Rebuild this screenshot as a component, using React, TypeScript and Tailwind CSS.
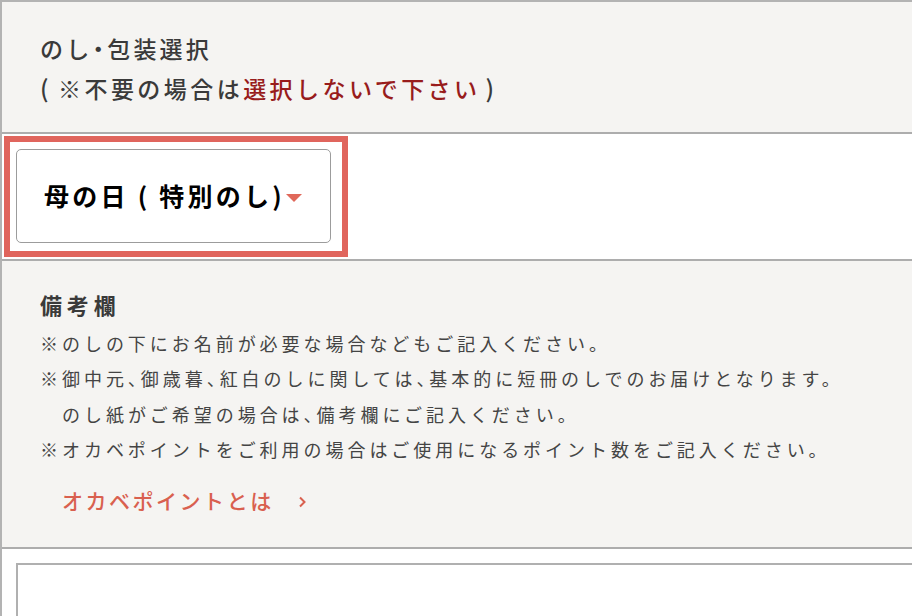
import React from 'react';

const notes = [
  { text: '※のしの下にお名前が必要な場合などもご記入ください。', indent: false },
  { text: '※御中元、御歳暮、紅白のしに関しては、基本的に短冊のしでのお届けとなります。', indent: false },
  { text: 'のし紙がご希望の場合は、備考欄にご記入ください。', indent: true },
  { text: '※オカベポイントをご利用の場合はご使用になるポイント数をご記入ください。', indent: false },
];

const App: React.FC = () => {
  return (
    <div className="w-[912px] h-[616px] overflow-hidden bg-white font-['Noto_Sans_CJK_JP','Noto_Sans',sans-serif]">
      <div className="border-l-2 border-t-2 border-[#b3b3b3] h-full">
        {/* のし・包装選択 */}
        <div className="h-[132px] bg-[#f5f4f2] border-b-2 border-[#adadad] px-[38px] pt-[27px]">
          <p className="text-[23px] leading-[39px] tracking-[0.14em] font-medium text-[#3a3a3a] [font-feature-settings:'halt']">
            のし・包装選択
          </p>
          <p className="text-[23px] leading-[39px] tracking-[0.15em] font-medium text-[#3a3a3a]">
            <span className="text-[24px]">(</span>
            <span className="ml-[6px]">※不要の場合は</span>
            <span className="text-[#981c1c]">選択しないで下さい</span>
            <span className="ml-[5px] text-[24px]">)</span>
          </p>
        </div>

        {/* select */}
        <div className="h-[127px] bg-white border-b-2 border-[#adadad] pt-[2px] pl-[2px]">
          <div className="w-[344px] h-[121px] border-[6px] border-[#e0655d] pt-[7px] pl-[6px]">
            <div className="w-[315px] h-[94px] rounded-[5px] border border-[#9c9c9c] flex items-center pl-[27px]">
              <span className="text-[25px] font-bold tracking-[0.13em] text-black">母の日 ( 特別のし)</span>
              <span className="ml-[1px] mt-[4px] w-0 h-0 border-l-[8px] border-r-[8px] border-t-[8px] border-l-transparent border-r-transparent border-t-[#e0685a]" />
            </div>
          </div>
        </div>

        {/* 備考欄 */}
        <div className="h-[288px] bg-[#f5f4f2] border-b-2 border-[#adadad] px-[38px] pt-[28px]">
          <p className="text-[22px] leading-[30px] font-bold tracking-[0.22em] text-[#3a3a3a]">備考欄</p>
          <div className="mt-[7px] text-[18px] leading-[35.3px] tracking-[0.22em] text-[#444] [font-feature-settings:'halt']">
            {notes.map((n) => (
              <p key={n.text} className={n.indent ? 'pl-[22px]' : ''}>
                {n.text}
              </p>
            ))}
          </div>
          <a className="mt-[19px] ml-[22px] h-[30px] flex items-center text-[21px] font-medium tracking-[0.12em] text-[#d9604f]">
            オカベポイントとは
            <svg className="ml-[24px] mt-[2px]" width="9" height="14" viewBox="0 0 9 14" fill="none">
              <path d="M2 2.5 L6.5 7 L2 11.5" stroke="#d9604f" strokeWidth="2" />
            </svg>
          </a>
        </div>

        {/* textarea */}
        <div className="bg-white pt-[14px] pl-[14px]">
          <textarea className="block w-[1000px] h-[200px] border-2 border-[#b0b0b0] outline-none resize-none" />
        </div>
      </div>
    </div>
  );
};

export default App;
